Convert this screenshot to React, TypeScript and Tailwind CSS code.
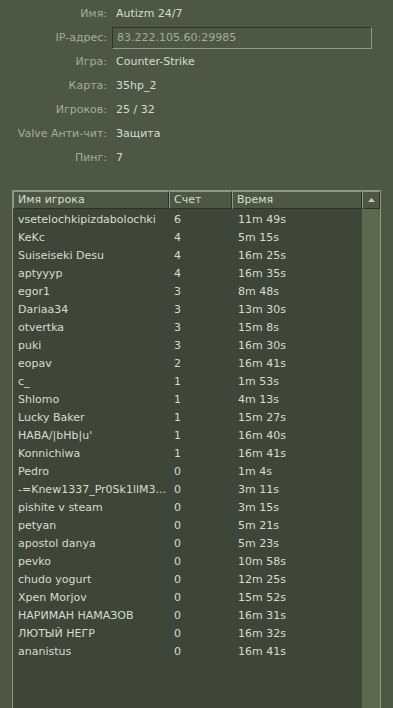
import React from "react";

const info = [
  { label: "Имя:", value: "Autizm 24/7" },
  { label: "IP-адрес:", value: "83.222.105.60:29985", field: true },
  { label: "Игра:", value: "Counter-Strike" },
  { label: "Карта:", value: "35hp_2" },
  { label: "Игроков:", value: "25 / 32" },
  { label: "Valve Анти-чит:", value: "Защита" },
  { label: "Пинг:", value: "7" },
];

const players: [string, number, string][] = [
  ["vsetelochkipizdabolochki", 6, "11m 49s"],
  ["KeKc", 4, "5m 15s"],
  ["Suiseiseki Desu", 4, "16m 25s"],
  ["aptyyyp", 4, "16m 35s"],
  ["egor1", 3, "8m 48s"],
  ["Dariaa34", 3, "13m 30s"],
  ["otvertka", 3, "15m 8s"],
  ["puki", 3, "16m 30s"],
  ["eopav", 2, "16m 41s"],
  ["c_", 1, "1m 53s"],
  ["Shlomo", 1, "4m 13s"],
  ["Lucky Baker", 1, "15m 27s"],
  ["HABA/|bHb|u'", 1, "16m 40s"],
  ["Konnichiwa", 1, "16m 41s"],
  ["Pedro", 0, "1m 4s"],
  ["-=Knew1337_Pr0Sk1llM3...", 0, "3m 11s"],
  ["pishite v steam", 0, "3m 15s"],
  ["petyan", 0, "5m 21s"],
  ["apostol danya", 0, "5m 23s"],
  ["pevko", 0, "10m 58s"],
  ["chudo yogurt", 0, "12m 25s"],
  ["Xpen Morjov", 0, "15m 52s"],
  ["НАРИМАН НАМАЗОВ", 0, "16m 31s"],
  ["ЛЮТЫЙ НЕГР", 0, "16m 32s"],
  ["ananistus", 0, "16m 41s"],
];

const headerCell =
  "h-[18px] flex items-center pl-[4px] border-t border-l border-t-[#8c9a80] border-l-[#8c9a80] border-b border-r border-b-[#2c3327] border-r-[#2c3327] bg-[#4c5844] text-[#d8dccf]";

export default function App() {
  return (
    <div className="w-[393px] h-[708px] overflow-hidden bg-[#4c5844] font-['DejaVu_Sans','Liberation_Sans',sans-serif] text-[11px] leading-[14px]">
      {/* Server details */}
      <div className="pt-[2px]">
        {info.map((row) => (
          <div key={row.label} className="h-[24px] flex items-center">
            <div className="w-[111px] text-right text-[#a3ad98] pr-[4px] whitespace-nowrap">{row.label}</div>
            {row.field ? (
              <div className="ml-[1px] w-[260px] h-[22px] flex items-center pl-[4px] border border-t-[#2c3327] border-l-[#2c3327] border-b-[#8c9a80] border-r-[#8c9a80] text-[#a3ad98]">
                {row.value}
              </div>
            ) : (
              <div className="pl-[5px] text-[#d8dccf]">{row.value}</div>
            )}
          </div>
        ))}
      </div>

      {/* Player list */}
      <div className="mt-[20px] ml-[12px] w-[369px] h-[600px] flex border-l border-t border-[#8c9a80] border-r border-r-[#8c9a80]">
        <div className="flex-1 flex flex-col bg-[#3e4637]">
          <div className="flex">
            <div className={`${headerCell} w-[156px]`}>Имя игрока</div>
            <div className={`${headerCell} w-[63px]`}>Счет</div>
            <div className={`${headerCell} flex-1`}>Время</div>
          </div>
          <div className="pt-[2px]">
            {players.map(([name, score, time]) => (
              <div key={name} className="h-[18px] flex items-center text-[#d8dccf]">
                <div className="w-[156px] pl-[5px] whitespace-nowrap overflow-hidden">{name}</div>
                <div className="w-[63px] pl-[5px]">{score}</div>
                <div className="flex-1 pl-[6px]">{time}</div>
              </div>
            ))}
          </div>
        </div>
        <div className="w-[18px] flex flex-col bg-[#5a6a50]">
          <div className="h-[18px] flex items-center justify-center bg-[#4c5844] border-t border-l border-t-[#8c9a80] border-l-[#8c9a80] border-b border-r border-b-[#2c3327] border-r-[#2c3327]">
            <svg width="7" height="4" viewBox="0 0 7 4">
              <polygon points="3.5,0 7,4 0,4" fill="#c4cbb8" />
            </svg>
          </div>
        </div>
      </div>
    </div>
  );
}
